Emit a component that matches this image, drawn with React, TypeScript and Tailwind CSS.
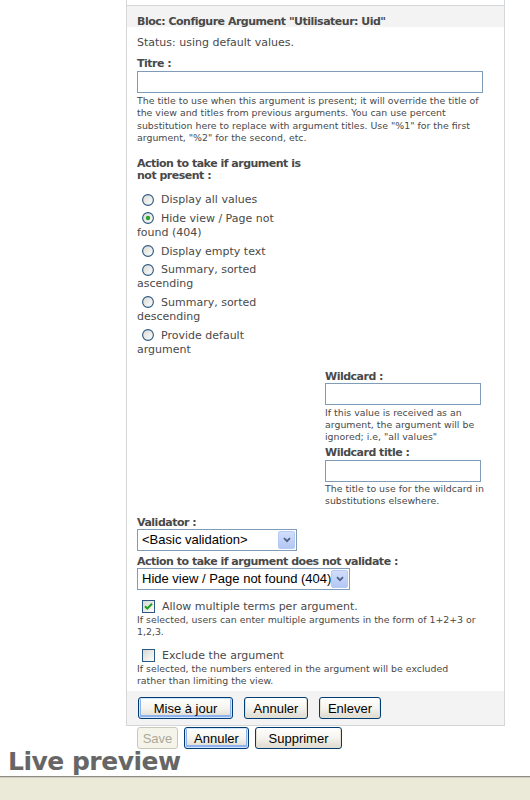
import React from "react";

function Radio({ checked = false }: { checked?: boolean }) {
  return (
    <svg width="12" height="12" viewBox="0 0 12 12" className="inline-block align-middle ml-[5px] mr-[7px] mb-[1px]">
      <defs>
        <linearGradient id="rg" x1="0" y1="0" x2="1" y2="1">
          <stop offset="0" stopColor="#d8d8d2" />
          <stop offset="1" stopColor="#ffffff" />
        </linearGradient>
      </defs>
      <circle cx="6" cy="6" r="5.4" fill="url(#rg)" stroke="#2a5783" strokeWidth="1.1" />
      {checked && <circle cx="6" cy="6" r="2.2" fill="#2aa52a" />}
    </svg>
  );
}

function Check({ checked = false }: { checked?: boolean }) {
  return (
    <svg width="13" height="13" viewBox="0 0 13 13" className="inline-block align-middle ml-[5px] mr-[7px] mb-[1px]">
      <defs>
        <linearGradient id="cg" x1="0" y1="0" x2="1" y2="1">
          <stop offset="0" stopColor="#d6d6d0" />
          <stop offset="1" stopColor="#ffffff" />
        </linearGradient>
      </defs>
      <rect x="0.5" y="0.5" width="12" height="12" fill="url(#cg)" stroke="#2a5783" />
      {checked && <path d="M3 6.2 L5.3 8.5 L10 3.8" fill="none" stroke="#21a121" strokeWidth="2" />}
    </svg>
  );
}

function FakeSelect({ value, width }: { value: string; width: string }) {
  return (
    <div className={`${width} h-[22px] border border-[#7f9db9] bg-white flex items-center justify-between pl-[4px] pr-[1px] font-['Liberation_Sans',Arial,sans-serif] text-[13px] text-black`}>
      <span className="whitespace-nowrap">{value}</span>
      <span className="w-[17px] h-[18px] rounded-[2px] border border-[#b6caf3] bg-gradient-to-b from-[#d2defc] to-[#b2c7f5] flex items-center justify-center">
        <svg width="8" height="6" viewBox="0 0 8 6">
          <path d="M1 1.2 L4 4.2 L7 1.2" fill="none" stroke="#4d6185" strokeWidth="1.8" />
        </svg>
      </span>
    </div>
  );
}

function XpButton({ label, width, focus = false, disabled = false }: { label: string; width: string; focus?: boolean; disabled?: boolean }) {
  const base = "h-[22px] rounded-[3px] flex items-center justify-center font-['Liberation_Sans',Arial,sans-serif] text-[13px]";
  if (disabled) {
    return <div className={`${base} ${width} border border-[#cac8bb] bg-[#f5f4ea] text-[#aca899]`}>{label}</div>;
  }
  return (
    <div
      className={`${base} ${width} border border-[#003c74] bg-gradient-to-b from-white via-[#f5f4ef] to-[#dcd8cc] text-black ${
        focus ? "shadow-[inset_0_0_0_1px_#cee7ff,inset_0_-1px_0_2px_#8fb1ee]" : "shadow-[inset_0_-1px_0_1px_#e3e0d3]"
      }`}
    >
      {label}
    </div>
  );
}

const label = "font-bold leading-[12px] tracking-[-0.5px]";
const small = "text-[9.4px]";

export default function App() {
  return (
    <div className="w-[530px] h-[800px] overflow-hidden bg-white flex flex-col font-['DejaVu_Sans',Verdana,sans-serif] text-[11px] text-[#494949]">
      <div className="ml-[126px] w-[379px] border-x border-b border-[#d3d7d9]">
        <div className="h-[5px]" />
        <div className="border-t border-[#d3d7d9] bg-[#f3f3f3] h-[22px] pl-[10px] pt-[9px] leading-[13px] font-bold tracking-[-0.5px] whitespace-nowrap">
          Bloc: Configure Argument "Utilisateur: Uid"
        </div>

        <div className="px-[10px] pt-[9px] pb-[4px]">
          <div className="leading-[13px]">Status: using default values.</div>

          <div className={`mt-[9px] ${label}`}>Titre :</div>
          <div className="mt-[1px] w-[346px] h-[22px] border border-[#7f9db9] bg-white" />
          <div className={`mt-[2px] ${small} leading-[12.3px]`}>
            The title to use when this argument is present; it will override the title of the view and titles from
            previous arguments. You can use percent substitution here to replace with argument titles. Use "%1" for
            the first argument, "%2" for the second, etc.
          </div>

          <div className={`mt-[14px] w-[170px] ${label} leading-[12.5px]`}>Action to take if argument is not present :</div>
          <div className="mt-[11px] w-[160px] flex flex-col gap-[4.7px] leading-[14px]">
            <div>
              <Radio />Display all values
            </div>
            <div>
              <Radio checked />Hide view / Page not found (404)
            </div>
            <div>
              <Radio />Display empty text
            </div>
            <div>
              <Radio />Summary, sorted ascending
            </div>
            <div>
              <Radio />Summary, sorted descending
            </div>
            <div>
              <Radio />Provide default argument
            </div>
          </div>

          <div className="ml-[188px] mt-[14px]">
            <div className={label}>Wildcard :</div>
            <div className="w-[156px] h-[22px] border border-[#7f9db9] bg-white" />
            <div className={`mt-[2px] ${small} leading-[12px]`}>
              If this value is received as an argument, the argument will be ignored; i.e, "all values"
            </div>
            <div className={`mt-[4px] ${label}`}>Wildcard title :</div>
            <div className="mt-[1px] w-[156px] h-[22px] border border-[#7f9db9] bg-white" />
            <div className={`mt-[1px] ${small} leading-[12px]`}>
              The title to use for the wildcard in substitutions elsewhere.
            </div>
          </div>

          <div className={`mt-[10px] ${label}`}>Validator :</div>
          <FakeSelect value="<Basic validation>" width="w-[160px]" />
          <div className={`mt-[5px] ${label}`}>Action to take if argument does not validate :</div>
          <FakeSelect value="Hide view / Page not found (404)" width="w-[213px]" />

          <div className="mt-[10px] leading-[14px]">
            <Check checked />Allow multiple terms per argument.
          </div>
          <div className={`${small} leading-[12.5px]`}>
            If selected, users can enter multiple arguments in the form of 1+2+3 or 1,2,3.
          </div>
          <div className="mt-[10px] leading-[14px]">
            <Check />Exclude the argument
          </div>
          <div className={`w-[335px] ${small} leading-[12.4px]`}>
            If selected, the numbers entered in the argument will be excluded rather than limiting the view.
          </div>
        </div>

        <div className="bg-[#f3f3f3] h-[34px] pl-[11px] flex items-center gap-[11px]">
          <XpButton label="Mise à jour" width="w-[95px]" focus />
          <XpButton label="Annuler" width="w-[64px]" />
          <XpButton label="Enlever" width="w-[62px]" />
        </div>
      </div>

      <div className="mt-[1px] pl-[137px] flex gap-[6px]">
        <XpButton label="Save" width="w-[41px]" disabled />
        <XpButton label="Annuler" width="w-[65px]" focus />
        <XpButton label="Supprimer" width="w-[87px]" />
      </div>

      <div className="pl-[8px] text-[25px] leading-[25px] font-bold tracking-[-0.5px] text-[#666666]">Live preview</div>

      <div className="mt-[2px] flex-1 border-t border-[#8e8c86] bg-[#ebe9d8] shadow-[inset_0_1px_0_#d0cdbf]" />
    </div>
  );
}
